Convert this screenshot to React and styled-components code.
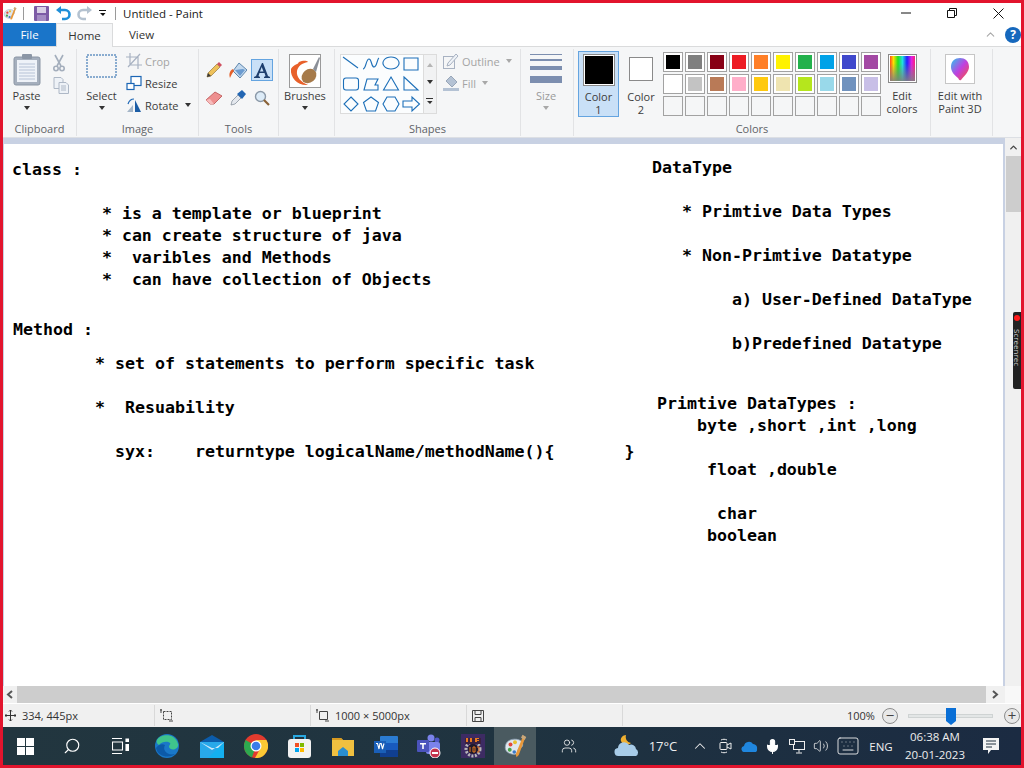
import React from 'react';
import styled, { createGlobalStyle } from 'styled-components';
import { ChevronUp, Mic, Volume2, Keyboard, Search, Users } from 'lucide-react';

const Global = createGlobalStyle`
  html, body { margin: 0; padding: 0; background: #fff; }
  * { box-sizing: border-box; }
`;

const Frame = styled.div`
  width: 1024px;
  height: 768px;
  border: 3px solid #e2142d;
  display: flex;
  flex-direction: column;
  overflow: hidden;
  position: relative;
  font-family: 'Open Sans', 'Noto Sans', sans-serif;
  font-size: 11px;
  color: #3c3c3c;
`;

/* title bar */
const TitleBar = styled.div`
  height: 20px;
  flex: none;
  display: flex;
  align-items: center;
  background: #fff;
`;
const QuickSlot = styled.div`
  width: ${p => p.$w}px;
  margin-left: ${p => p.$m || 0}px;
  display: flex;
  justify-content: center;
  align-items: center;
`;
const TitleSep = styled.div`
  width: 1px;
  height: 13px;
  background: #9a9a9a;
`;
const TitleText = styled.span`
  margin-left: 7px;
  font-size: 11.5px;
  color: #222;
`;
const WinControls = styled.div`
  margin-left: auto;
  display: flex;
`;
const WinBtn = styled.div`
  width: 46px;
  height: 20px;
  display: flex;
  align-items: center;
  justify-content: center;
`;

/* tabs */
const TabRow = styled.div`
  height: 23px;
  flex: none;
  display: flex;
  background: #fff;
  position: relative;
`;
const FileTab = styled.div`
  width: 53px;
  background: #1a75c9;
  color: #fff;
  font-size: 11.5px;
  display: flex;
  align-items: center;
  justify-content: center;
`;
const Tab = styled.div`
  width: ${p => p.$w}px;
  display: flex;
  align-items: center;
  justify-content: center;
  font-size: 11.5px;
  color: #333;
  background: ${p => (p.$active ? '#f5f6f7' : '#fff')};
  border: ${p => (p.$active ? '1px solid #dadbdc' : 'none')};
  border-bottom: none;
  margin-bottom: ${p => (p.$active ? '-1px' : '0')};
  padding-bottom: ${p => (p.$active ? '1px' : '0')};
  z-index: 1;
`;
const HelpArea = styled.div`
  margin-left: auto;
  display: flex;
  align-items: center;
  gap: 8px;
`;
const HelpDot = styled.div`
  width: 16px;
  height: 16px;
  border-radius: 50%;
  background: #1668bd;
  color: #fff;
  font-weight: 700;
  font-size: 12px;
  display: flex;
  align-items: center;
  justify-content: center;
`;

/* ribbon */
const Ribbon = styled.div`
  height: 92px;
  flex: none;
  background: #f5f6f7;
  border-top: 1px solid #dadbdc;
  border-bottom: 1px solid #dcdfe4;
  padding-top: 2px;
  display: flex;
  align-items: flex-start;
`;
const Group = styled.div`
  width: ${p => p.$w}px;
  height: 87px;
  flex: none;
  display: flex;
  flex-direction: column;
  border-right: 1px solid #e2e3e5;
`;
const GroupBody = styled.div`
  height: 73px;
  display: flex;
  align-items: flex-start;
`;
const GroupLabel = styled.div`
  height: 14px;
  line-height: 14px;
  text-align: center;
  color: #5f6368;
  font-size: 11px;
`;
const BigBtn = styled.div`
  width: ${p => p.$w}px;
  flex: none;
  display: flex;
  flex-direction: column;
  align-items: center;
  padding-top: 5px;
  color: ${p => (p.$off ? '#9a9a9a' : '#3c3c3c')};
`;
const BigIcon = styled.div`
  height: 35px;
  display: flex;
  align-items: flex-start;
  justify-content: center;
`;
const BigText = styled.div`
  line-height: 13px;
  text-align: center;
  white-space: pre;
`;
const Caret = styled.div`
  width: 0;
  height: 0;
  margin-top: 4px;
  border-left: 3px solid transparent;
  border-right: 3px solid transparent;
  border-top: 4px solid ${p => (p.$off ? '#a8a8a8' : '#333')};
`;
const SmallCaret = styled(Caret)`
  margin: 0 0 0 3px;
`;
const SideIcons = styled.div`
  display: flex;
  flex-direction: column;
  gap: 5px;
  padding-top: 5px;
  margin-left: 3px;
`;
const SmallCol = styled.div`
  display: flex;
  flex-direction: column;
  padding-top: 1px;
  margin-left: ${p => p.$m || 0}px;
`;
const SmallBtn = styled.div`
  height: 22px;
  display: flex;
  align-items: center;
  gap: 3px;
  color: ${p => (p.$off ? '#a4a4a4' : '#3c3c3c')};
`;
const ToolGrid = styled.div`
  display: grid;
  grid-template-columns: repeat(3, 24px);
  grid-auto-rows: 26px;
  row-gap: 2px;
  margin: 8px 0 0 3px;
`;
const ToolCell = styled.div`
  display: flex;
  align-items: center;
  justify-content: center;
  margin: ${p => (p.$on ? '2px 1px' : '0')};
  background: ${p => (p.$on ? '#c9e0f7' : 'transparent')};
  border: ${p => (p.$on ? '1px solid #64a4e0' : 'none')};
`;
const Gallery = styled.div`
  width: 97px;
  height: 60px;
  margin: 5px 0 0 5px;
  border: 1px solid #dcdcdc;
  display: flex;
  background: #fff;
`;
const ShapeGrid = styled.div`
  width: 82px;
  display: grid;
  grid-template-columns: repeat(4, 20px);
  grid-auto-rows: 20px;
  align-content: center;
  justify-items: center;
  align-items: center;
  background: #fbfdfe;
`;
const GalleryScroll = styled.div`
  flex: 1;
  display: flex;
  flex-direction: column;
  align-items: center;
  justify-content: space-around;
  background: #f1f2f3;
  border-left: 1px solid #dcdcdc;
  padding: 2px 0;
`;
const Arrow = styled.div`
  width: 0;
  height: 0;
  border-left: 3px solid transparent;
  border-right: 3px solid transparent;
  ${p => (p.$up ? `border-bottom: 4px solid ${p.$c}` : `border-top: 4px solid ${p.$c}`)};
`;
const SizeLines = styled.div`
  width: 32px;
  display: flex;
  flex-direction: column;
`;
const SizeLine = styled.div`
  height: ${p => p.$h}px;
  margin-bottom: ${p => p.$gap}px;
  background: #7c8eaf;
`;
const ColorOne = styled(BigBtn)`
  width: 41px;
  height: 66px;
  margin: 2px 0 0 4px;
  padding-top: 2px;
  background: #c9e0f7;
  border: 1px solid #64a4e0;
`;
const Well = styled.div`
  width: ${p => p.$s}px;
  height: ${p => p.$s}px;
  background: ${p => p.$c};
  border: 1px solid #8a8a8a;
  box-shadow: inset 0 0 0 ${p => p.$inner}px #fff;
`;
const WellBox = styled.div`
  height: ${p => p.$h}px;
  padding-top: ${p => p.$pt || 0}px;
  display: flex;
  align-items: flex-start;
  justify-content: center;
`;
const Swatches = styled.div`
  display: grid;
  grid-template-columns: repeat(10, 20px);
  grid-auto-rows: 20px;
  gap: 2px;
  margin-top: 3px;
`;
const Swatch = styled.div`
  border: 1px solid #a2a2a2;
  background: ${p => p.$c || '#f5f6f7'};
  box-shadow: ${p => (p.$c ? 'inset 0 0 0 2px #fff' : 'none')};
`;
const SpectrumTile = styled.div`
  width: 29px;
  height: 29px;
  border: 1px solid #8a8a8a;
  box-shadow: inset 0 0 0 1px #fff;
  background: linear-gradient(180deg, rgba(128,128,128,0) 30%, rgba(128,128,128,.95) 100%),
    linear-gradient(90deg, #ff2020, #ffe000, #20e020, #20e0e0, #2020ff, #e020e0, #ff2060);
`;
const Paint3dTile = styled.div`
  width: 30px;
  height: 30px;
  background: #fff;
  border: 1px solid #c6c6c6;
  display: flex;
  align-items: center;
  justify-content: center;
`;

/* workspace */
const Workspace = styled.div`
  height: 565px;
  flex: none;
  display: grid;
  grid-template-columns: 1fr 16px;
  grid-template-rows: 1fr 17px;
  background: #f0f0f0;
`;
const CanvasArea = styled.div`
  background: #c8d1e3;
  padding: 6px 2px 0 1px;
  display: flex;
`;
const Canvas = styled.div`
  flex: 1;
  background: #fff;
  position: relative;
`;
const Note = styled.div`
  position: absolute;
  left: ${p => p.$x}px;
  top: ${p => p.$y}px;
  margin: 0;
  font-family: 'DejaVu Sans Mono', 'Liberation Mono', monospace;
  font-weight: 700;
  font-size: 16.6px;
  line-height: 22px;
  color: #000;
  white-space: pre;
`;
const VScroll = styled.div`
  background: #f0f0f0;
  display: flex;
  flex-direction: column;
`;
const ScrollEnd = styled.div`
  height: ${p => p.$h || 12}px;
  width: ${p => p.$w || 'auto'};
  flex: none;
  display: flex;
  align-items: center;
  justify-content: center;
`;
const VThumb = styled.div`
  height: 56px;
  margin-left: 1px;
  background: #cdcdcd;
`;
const HScroll = styled.div`
  display: flex;
  background: #f0f0f0;
`;
const HTrack = styled.div`
  width: 969px;
  background: #cdcdcd;
`;
const Corner = styled.div`
  background: #f8f8f8;
`;

/* status bar */
const StatusBar = styled.div`
  height: 24px;
  flex: none;
  display: flex;
  align-items: center;
  background: #f0f0f0;
  border-top: 1px solid #fff;
  color: #333;
  font-size: 11px;
`;
const StatusCell = styled.div`
  width: ${p => p.$w}px;
  height: 21px;
  flex: none;
  display: flex;
  align-items: center;
  gap: 6px;
  padding-left: ${p => p.$p ?? 5}px;
  border-right: 1px solid ${p => (p.$last ? 'transparent' : '#d9d9d9')};
`;
const ZoomArea = styled.div`
  flex: 1;
  display: flex;
  align-items: center;
  padding-left: 22px;
`;
const ZoomLabel = styled.span`
  width: 35px;
  flex: none;
`;
const ZoomBtn = styled.div`
  width: 16px;
  height: 16px;
  border-radius: 50%;
  border: 1px solid #8d8d8d;
  background: #e8e8e8;
  display: flex;
  align-items: center;
  justify-content: center;
  font-size: 15px;
  line-height: 1;
  color: #444;
  flex: none;
`;
const SliderTrack = styled.div`
  width: 85px;
  height: 4px;
  margin: 0 11px 0 10px;
  background: #e3e6e6;
  border: 1px solid #cfd3d3;
  position: relative;
`;
const SliderThumb = styled.svg`
  position: absolute;
  left: 37px;
  top: -7px;
`;

/* taskbar */
const Taskbar = styled.div`
  height: 38px;
  flex: none;
  display: flex;
  align-items: center;
  background: linear-gradient(90deg, #22363f, #1f3340 50%, #1b2b42);
  color: #f2f2f2;
`;
const TaskSlot = styled.div`
  width: ${p => p.$w}px;
  height: 38px;
  margin-left: ${p => p.$m || 0}px;
  flex: none;
  display: flex;
  align-items: center;
  justify-content: center;
  background: ${p => (p.$active ? '#4a5a60' : 'transparent')};
`;
const WinLogo = styled.div`
  display: grid;
  grid-template-columns: 8px 8px;
  grid-auto-rows: 8px;
  gap: 1px;
`;
const WinPane = styled.div`
  background: #fff;
`;
const TempText = styled.span`
  font-size: 13px;
  color: #eee;
`;
const Eng = styled.span`
  font-size: 11.5px;
  color: #eee;
`;
const Clock = styled.div`
  text-align: center;
  font-size: 11.5px;
  line-height: 18px;
  color: #eee;
  margin-top: -1px;
`;

/* screenrec tab lies over the window edge */
const RecTab = styled.div`
  position: absolute;
  right: 0;
  top: 309px;
  width: 8px;
  height: 77px;
  background: #222;
  border-radius: 2px 0 0 2px;
  display: flex;
  flex-direction: column;
  align-items: center;
  padding-top: 3px;
`;
const RecDot = styled.div`
  width: 6px;
  height: 6px;
  flex: none;
  border-radius: 50%;
  background: #ff1a1a;
`;
const RecText = styled.div`
  writing-mode: vertical-rl;
  font-size: 8px;
  line-height: 8px;
  color: #ccc;
  margin-top: 8px;
`;

const PaintIcon = ({ s = 16 }) => (
  <svg width={s} height={s} viewBox="0 0 32 32">
    <path d="M3 18c0-8 7-12 15-11 7 1 9 5 8 9-1 3-5 2-6 5-1 4-2 7-7 6-6-1-10-4-10-9z" fill="#dfe7ee" stroke="#8fa3b5" />
    <circle cx="10" cy="14" r="2.6" fill="#e0483a" />
    <circle cx="16" cy="11" r="2.6" fill="#e8c030" />
    <circle cx="9" cy="21" r="2.6" fill="#4aa04a" />
    <circle cx="15" cy="24" r="2.4" fill="#3a78c8" />
    <path d="M27 2l3 2-9 24-3 3-1-4z" fill="#e8983a" />
    <path d="M26 1l5 3-2 4-5-3z" fill="#c9a77a" />
  </svg>
);

const ClipboardIcon = () => (
  <svg width="28" height="32" viewBox="0 0 28 32">
    <rect x="1" y="3" width="26" height="28" rx="2" fill="#a5afbd" stroke="#8b96a5" />
    <rect x="4" y="6" width="20" height="22" fill="#eef2f8" />
    <path d="M6 10h16M6 13h16M6 16h16M6 19h16M6 22h16M6 25h16" stroke="#b6c2d6" />
    <rect x="9" y="0" width="10" height="5" rx="1" fill="#8b96a5" />
  </svg>
);

const CutIcon = () => (
  <svg width="12" height="18" viewBox="0 0 12 18" fill="none" stroke="#a4aebc" strokeWidth="1.6">
    <path d="M2 1l6 11M10 1L4 12" />
    <circle cx="3" cy="14.5" r="2.2" />
    <circle cx="9" cy="14.5" r="2.2" />
  </svg>
);

const CopyIcon = () => (
  <svg width="16" height="17" viewBox="0 0 16 17" fill="#eef2f7" stroke="#aeb8c6">
    <path d="M1 .5h7l2 2v9H1z" />
    <path d="M6 5.500h7l2.500 2.500v8.500H6z" />
    <path d="M8 9h5M8 11h5M8 13h5" fill="none" />
  </svg>
);

const CropIcon = () => (
  <svg width="16" height="16" viewBox="0 0 16 16" fill="none" stroke="#a8b2c2" strokeWidth="1.2">
    <path d="M4 0v12h12M0 4h12v12M14 1L2 14" />
  </svg>
);
const ResizeIcon = () => (
  <svg width="16" height="16" viewBox="0 0 16 16" fill="#fff" stroke="#1c66b5" strokeWidth="1.2">
    <rect x="5" y="1.500" width="10" height="9" />
    <rect x="1" y="8.500" width="7" height="6" />
  </svg>
);
const RotateIcon = () => (
  <svg width="16" height="16" viewBox="0 0 16 16">
    <path d="M9 15V3l6 12z" fill="#1c5da5" />
    <path d="M1 15l6-7v7z" fill="#a5b6c8" />
    <path d="M2 7c1-3 3-5 6-5" fill="none" stroke="#1c66b5" strokeWidth="1.2" />
  </svg>
);

const PencilIcon = () => (
  <svg width="16" height="16" viewBox="0 0 16 16">
    <path d="M1 15l1-4 9-9 3 3-9 9z" fill="#eec15a" stroke="#8a6a2a" strokeWidth=".6" />
    <path d="M1 15l1-4 3 3z" fill="#3a3a3a" />
    <path d="M11 2l2-2 3 3-2 2z" fill="#d05060" />
  </svg>
);
const BucketIcon = () => (
  <svg width="18" height="18" viewBox="0 0 18 18">
    <path d="M10 2l8 7-7 8-7-7z" fill="#c3d9ee" stroke="#5d86ad" />
    <path d="M6 9l8-1 2 1-5 6z" fill="#6b9bd0" />
    <path d="M4 8C0 10 0 14 1 17c1-2 2-5 4-7z" fill="#e5602a" />
  </svg>
);
const EraserIcon = () => (
  <svg width="18" height="14" viewBox="0 0 18 14">
    <path d="M1 9l9-8 7 4-8 8H5z" fill="#ee8f8f" stroke="#c46666" />
    <path d="M1 9l4 4h4l-4-5z" fill="#f7bcbc" />
  </svg>
);
const PickerIcon = () => (
  <svg width="16" height="16" viewBox="0 0 16 16">
    <path d="M1 15l1-4 6-6 3 3-6 6z" fill="#e4e8ee" stroke="#7b8794" strokeWidth=".7" />
    <path d="M7 4l5-4 4 4-4 5z" fill="#2266b3" />
  </svg>
);
const LensIcon = () => (
  <svg width="16" height="16" viewBox="0 0 16 16">
    <circle cx="6.500" cy="6.500" r="5" fill="#dcebf7" stroke="#8b99a8" strokeWidth="1.4" />
    <path d="M10 10l5 5" stroke="#8a6238" strokeWidth="2.2" />
  </svg>
);

const BrushTile = () => (
  <svg width="32" height="34" viewBox="0 0 32 34">
    <rect x=".5" y=".5" width="31" height="33" fill="#fff" stroke="#9a9a9a" />
    <path d="M2 15c-1 9 7 17 17 16-7-3-12-8-11-14 1-5 5-8 11-9-2-2-6-1-9 0-1 1-1 2-2 2-3 1-5 3-6 5z" fill="#e8602a" />
    <ellipse cx="20" cy="22" rx="8" ry="6.500" fill="#a67a4a" transform="rotate(-40 20 22)" />
    <path d="M24 15l6-12 1 1-4 14z" fill="#8a8f98" />
  </svg>
);

const shapes = [
  'M2 3l15 11',
  'M2 15c3 0 3-10 6-10s2 8 5 8 3-8 5-9',
  'M10 3a8 6 0 1 0 .01 0',
  'M3 4h14v12H3z',
  'M5 4h10a2.500 2.500 0 0 1 2.500 2.500v7a2.500 2.500 0 0 1-2.500 2.500H5a2.500 2.500 0 0 1-2.500-2.500v-7A2.500 2.500 0 0 1 5 4z',
  'M3 16l3-11h11l-3 6h3v5z',
  'M10 3l7.500 13h-15z',
  'M3 3l14 13H3z',
  'M10 3l7 7-7 7-7-7z',
  'M10 3l7.500 5.500-3 8.500h-9l-3-8.500z',
  'M6 3h8l4 7-4 7H6l-4-7z',
  'M2 7h9V3l7.500 7-7.500 7v-4H2z',
];

const swatches = [
  '#000000', '#7f7f7f', '#880015', '#ed1c24', '#ff7f27', '#fff200', '#22b14c', '#00a2e8', '#3f48cc', '#a349a4',
  '#ffffff', '#c3c3c3', '#b97a57', '#ffaec9', '#ffc90e', '#efe4b0', '#b5e61d', '#99d9ea', '#7092be', '#c8bfe7',
  null, null, null, null, null, null, null, null, null, null,
];

const notes = [
  { x: 8, y: 15, text: 'class :\n\n         * is a template or blueprint\n         * can create structure of java\n         *  varibles and Methods\n         *  can have collection of Objects' },
  { x: 9, y: 175, text: 'Method :' },
  { x: 91, y: 209, text: '* set of statements to perform specific task\n\n*  Resuability' },
  { x: 111, y: 297, text: 'syx:    returntype logicalName/methodName(){       }' },
  { x: 648, y: 13, text: 'DataType\n\n   * Primtive Data Types\n\n   * Non-Primtive Datatype\n\n        a) User-Defined DataType\n\n        b)Predefined Datatype' },
  { x: 653, y: 249, text: 'Primtive DataTypes :\n    byte ,short ,int ,long\n\n     float ,double\n\n      char\n     boolean' },
];

const TitleRow = () => (
  <TitleBar>
    <QuickSlot $w={14}><PaintIcon s={15} /></QuickSlot>
    <QuickSlot $w={6} />
    <TitleSep />
    <QuickSlot $w={24} $m={5}>
      <svg width="15" height="15" viewBox="0 0 15 15">
        <rect width="15" height="15" rx="1" fill="#7d5ba6" />
        <rect x="3" y="1" width="9" height="6" fill="#d9d0e6" />
        <rect x="3" y="9" width="9" height="6" fill="#a48cc4" />
      </svg>
    </QuickSlot>
    <QuickSlot $w={21}>
      <svg width="15" height="15" viewBox="0 0 15 15" fill="none">
        <path d="M4 4h5a4 4 0 0 1 0 9H6" stroke="#1f8fd8" strokeWidth="2.600" />
        <path d="M0 4l5-4v8z" fill="#1f8fd8" />
      </svg>
    </QuickSlot>
    <QuickSlot $w={21}>
      <svg width="15" height="15" viewBox="0 0 15 15" fill="none">
        <path d="M11 4H6a4 4 0 0 0 0 9h3" stroke="#b4c2d0" strokeWidth="2.600" />
        <path d="M15 4l-5-4v8z" fill="#b4c2d0" />
      </svg>
    </QuickSlot>
    <QuickSlot $w={16}>
      <svg width="8" height="8" viewBox="0 0 8 8"><path d="M0 1h7v1H0zM1 4h5.500L4 7z" fill="#111" /></svg>
    </QuickSlot>
    <QuickSlot $w={4} />
    <TitleSep />
    <TitleText>Untitled - Paint</TitleText>
    <WinControls>
      <WinBtn>
        <svg width="10" height="10" viewBox="0 0 10 10"><path d="M0 5h10" stroke="#111" /></svg>
      </WinBtn>
      <WinBtn>
        <svg width="10" height="10" viewBox="0 0 10 10" fill="none" stroke="#111">
          <path d="M.5 2.500h7v7h-7zM2.500 2.500v-2h7v7h-2" />
        </svg>
      </WinBtn>
      <WinBtn>
        <svg width="11" height="11" viewBox="0 0 11 11" stroke="#111"><path d="M.5.5l10 10M10.500.5l-10 10" /></svg>
      </WinBtn>
    </WinControls>
  </TitleBar>
);

const RibbonRow = () => (
  <Ribbon>
    <Group $w={74}>
      <GroupBody>
        <BigBtn $w={47}>
          <BigIcon><ClipboardIcon /></BigIcon>
          <BigText>Paste</BigText>
          <Caret />
        </BigBtn>
        <SideIcons>
          <CutIcon />
          <CopyIcon />
        </SideIcons>
      </GroupBody>
      <GroupLabel>Clipboard</GroupLabel>
    </Group>
    <Group $w={122}>
      <GroupBody>
        <BigBtn $w={49}>
          <BigIcon>
            <svg width="31" height="24" viewBox="0 0 31 24" fill="none">
              <rect x="1" y="1" width="29" height="22" stroke="#1f62a8" strokeDasharray="2 1" />
            </svg>
          </BigIcon>
          <BigText>Select</BigText>
          <Caret />
        </BigBtn>
        <SmallCol>
          <SmallBtn $off><CropIcon />Crop</SmallBtn>
          <SmallBtn><ResizeIcon />Resize</SmallBtn>
          <SmallBtn><RotateIcon />Rotate<SmallCaret /></SmallBtn>
        </SmallCol>
      </GroupBody>
      <GroupLabel>Image</GroupLabel>
    </Group>
    <Group $w={80}>
      <GroupBody>
        <ToolGrid>
          <ToolCell><PencilIcon /></ToolCell>
          <ToolCell><BucketIcon /></ToolCell>
          <ToolCell $on>
            <svg width="16" height="15" viewBox="0 0 16 15">
              <path d="M8 0h1l5 13 2 1v1h-6v-1l1.500-1-1-3H5.500l-1 3 1.500 1v1H0v-1l2-1zM6 8.500h3.500L7.700 4z" fill="#1f3f6e" />
            </svg>
          </ToolCell>
          <ToolCell><EraserIcon /></ToolCell>
          <ToolCell><PickerIcon /></ToolCell>
          <ToolCell><LensIcon /></ToolCell>
        </ToolGrid>
      </GroupBody>
      <GroupLabel>Tools</GroupLabel>
    </Group>
    <Group $w={56}>
      <GroupBody>
        <BigBtn $w={52}>
          <BigIcon><BrushTile /></BigIcon>
          <BigText>Brushes</BigText>
          <Caret />
        </BigBtn>
      </GroupBody>
      <GroupLabel />
    </Group>
    <Group $w={186}>
      <GroupBody>
        <Gallery>
          <ShapeGrid>
            {shapes.map(d => (
              <svg key={d} width="20" height="20" viewBox="0 0 20 20" fill="none" stroke="#1c6fb8" strokeWidth="1.1">
                <path d={d} />
              </svg>
            ))}
          </ShapeGrid>
          <GalleryScroll>
            <Arrow $up $c="#b5b5b5" />
            <Arrow $c="#333" />
            <svg width="8" height="8" viewBox="0 0 8 8"><path d="M0 1h7v1H0zM1 4h5.500L4 7z" fill="#333" /></svg>
          </GalleryScroll>
        </Gallery>
        <SmallCol $m={6}>
          <SmallBtn $off>
            <svg width="16" height="16" viewBox="0 0 16 16" fill="none" stroke="#a8b2c2">
              <rect x=".5" y="3.500" width="11" height="12" />
              <path d="M5 10l8-9 2 2-8 9-3 1z" fill="#eef2f7" />
            </svg>
            Outline<SmallCaret $off />
          </SmallBtn>
          <SmallBtn $off>
            <svg width="16" height="16" viewBox="0 0 16 16">
              <path d="M8 1l6 6-5 5-6-6z" fill="#b4c2d4" stroke="#98a6b8" />
              <rect x="0" y="13" width="16" height="3" fill="#b4c2d4" />
            </svg>
            Fill<SmallCaret $off />
          </SmallBtn>
        </SmallCol>
      </GroupBody>
      <GroupLabel>Shapes</GroupLabel>
    </Group>
    <Group $w={53}>
      <GroupBody>
        <BigBtn $w={50} $off>
          <BigIcon>
            <SizeLines>
              <SizeLine $h={1} $gap={4} />
              <SizeLine $h={2} $gap={5} />
              <SizeLine $h={4} $gap={6} />
              <SizeLine $h={7} $gap={0} />
            </SizeLines>
          </BigIcon>
          <BigText>Size</BigText>
          <Caret $off />
        </BigBtn>
      </GroupBody>
      <GroupLabel />
    </Group>
    <Group $w={357}>
      <GroupBody>
        <ColorOne>
          <WellBox $h={36}><Well $s={32} $c="#000" $inner={1} /></WellBox>
          <BigText>{'Color\n1'}</BigText>
        </ColorOne>
        <BigBtn $w={44}>
          <WellBox $h={36} $pt={3}><Well $s={24} $c="#fff" $inner={0} /></WellBox>
          <BigText>{'Color\n2'}</BigText>
        </BigBtn>
        <Swatches>
          {swatches.map((c, i) => <Swatch key={i} $c={c} />)}
        </Swatches>
        <BigBtn $w={42}>
          <WellBox $h={35}><SpectrumTile /></WellBox>
          <BigText>{'Edit\ncolors'}</BigText>
        </BigBtn>
      </GroupBody>
      <GroupLabel>Colors</GroupLabel>
    </Group>
    <Group $w={62}>
      <GroupBody>
        <BigBtn $w={58}>
          <WellBox $h={35}>
            <Paint3dTile>
              <svg width="20" height="24" viewBox="0 0 20 24">
                <defs>
                  <linearGradient id="drop" x1="0" y1="0" x2="1" y2="1">
                    <stop offset="0" stopColor="#28c8f0" />
                    <stop offset=".5" stopColor="#c040e0" />
                    <stop offset="1" stopColor="#ff5030" />
                  </linearGradient>
                </defs>
                <path d="M10 1c5 0 9 3 9 9 0 5-5 9-8 13-2 1-2-1-3-2C4 18 1 14 1 10c0-6 4-9 9-9z" fill="url(#drop)" />
              </svg>
            </Paint3dTile>
          </WellBox>
          <BigText>{'Edit with\nPaint 3D'}</BigText>
        </BigBtn>
      </GroupBody>
      <GroupLabel />
    </Group>
  </Ribbon>
);

const TaskbarRow = () => (
  <Taskbar>
    <TaskSlot $w={45}>
      <WinLogo><WinPane /><WinPane /><WinPane /><WinPane /></WinLogo>
    </TaskSlot>
    <TaskSlot $w={48}>
      <Search size={18} color="#fff" strokeWidth={1.5} style={{ transform: 'scaleX(-1)' }} />
    </TaskSlot>
    <TaskSlot $w={48}>
      <svg width="17" height="16" viewBox="0 0 17 16" fill="none" stroke="#fff" strokeWidth="1.100">
        <path d="M0 .5h10M0 15.500h10M.5 4h10v8H.5z" />
        <path d="M14 1h2.500v2.500H14zM14 6.500h2.500v6H14z" fill="#fff" />
      </svg>
    </TaskSlot>
    <TaskSlot $w={46}>
      <svg width="24" height="24" viewBox="0 0 24 24">
        <circle cx="12" cy="12" r="12" fill="#1a78c8" />
        <path d="M2 6c3-6 18-8 21 4 1 6-8 7-9 3 0-2 2-3 1-4-2-2-8-2-11 2-2-1-3-3-2-5z" fill="#3fc48c" />
        <path d="M10 11c-3 5 2 11 10 9-4 4-17 4-19-6 2-3 6-5 9-3z" fill="#0c5aa8" />
      </svg>
    </TaskSlot>
    <TaskSlot $w={43}>
      <svg width="24" height="23" viewBox="0 0 24 23">
        <path d="M12 0l12 7H0z" fill="#0b5cab" />
        <rect y="7" width="24" height="16" fill="#28a8ea" />
        <path d="M0 7l12 8 12-8v6l-12 0L0 7z" fill="#cfe9fa" />
        <path d="M24 7v16H8z" fill="#14b0f0" />
      </svg>
    </TaskSlot>
    <TaskSlot $w={45}>
      <svg width="24" height="24" viewBox="0 0 24 24">
        <circle cx="12" cy="12" r="12" fill="#e33b2e" />
        <path d="M12 12L1.600 6a12 12 0 0 0 6.400 17.300z" fill="#2da94f" />
        <path d="M12 6h10.400A12 12 0 0 1 11 24l5-9z" fill="#fcc934" />
        <circle cx="12" cy="12" r="5.500" fill="#fff" />
        <circle cx="12" cy="12" r="4.300" fill="#3b7de8" />
      </svg>
    </TaskSlot>
    <TaskSlot $w={43}>
      <svg width="23" height="24" viewBox="0 0 23 24">
        <path d="M6 5V2h11v3" fill="none" stroke="#29a8e0" strokeWidth="2" />
        <rect y="5" width="23" height="19" rx="3" fill="#f2f2f2" />
        <rect x="7" y="9" width="4" height="4" fill="#f25022" />
        <rect x="12" y="9" width="4" height="4" fill="#7fba00" />
        <rect x="7" y="14" width="4" height="4" fill="#00a4ef" />
        <rect x="12" y="14" width="4" height="4" fill="#ffb900" />
      </svg>
    </TaskSlot>
    <TaskSlot $w={43}>
      <svg width="22" height="19" viewBox="0 0 22 19">
        <path d="M0 1h9l2 2h11v16H0z" fill="#f0c040" />
        <path d="M0 1h9l2 2H0z" fill="#d89a20" />
        <path d="M6 14l5-4 5 4v5H6z" fill="#2a8ed0" />
      </svg>
    </TaskSlot>
    <TaskSlot $w={43}>
      <svg width="24" height="21" viewBox="0 0 24 21">
        <rect x="6" width="18" height="21" rx="1" fill="#2b7cd3" />
        <rect x="6" y="7" width="18" height="7" fill="#185abd" />
        <rect x="6" y="14" width="18" height="7" fill="#103f91" />
        <rect y="5" width="12" height="12" fill="#1a5fb8" />
        <path d="M2 7.500h1.500L5 13l1-5.500 1.200 0L8.500 13 10 7.500" fill="none" stroke="#fff" strokeWidth="1.100" />
      </svg>
    </TaskSlot>
    <TaskSlot $w={44}>
      <svg width="24" height="24" viewBox="0 0 24 24">
        <circle cx="14" cy="4" r="3.500" fill="#7b83eb" />
        <circle cx="20" cy="6" r="2.500" fill="#5059c9" />
        <rect x="9" y="8" width="14" height="12" rx="2" fill="#7b83eb" />
        <rect y="6" width="12" height="12" rx="1" fill="#4b53bc" />
        <path d="M3 9h6v1.500H6.800V15H5.200v-4.500H3z" fill="#fff" />
        <circle cx="18" cy="19" r="5" fill="#c4314b" stroke="#fff" />
        <rect x="15" y="18" width="6" height="2" fill="#fff" />
      </svg>
    </TaskSlot>
    <TaskSlot $w={43}>
      <svg width="24" height="24" viewBox="0 0 24 24">
        <rect width="24" height="24" fill="#3d2b63" />
        <circle cx="12" cy="15" r="7" fill="none" stroke="#b8b8b8" strokeWidth="3" strokeDasharray="2 1.500" />
        <circle cx="12" cy="15" r="5" fill="#201a2a" />
        <path d="M4 4h16v6H4z" fill="#3b2240" />
        <path d="M5 8V4h2v4zM9 8V4h2v4zM14 8V4h4v1h-2v1h2v1h-2v1h2" fill="#e87a20" />
        <path d="M9 13v5M12 13h2v5h-2zM16 13h2v5h-2" fill="none" stroke="#e87a20" />
      </svg>
    </TaskSlot>
    <TaskSlot $w={42} $active>
      <PaintIcon s={24} />
    </TaskSlot>
    <TaskSlot $w={34} $m={16}><Users size={16} color="#eee" strokeWidth={1.300} /></TaskSlot>
    <TaskSlot $w={30} $m={26}>
      <svg width="26" height="24" viewBox="0 0 26 24">
        <path d="M12 1c-1 4 1 7 5 8-3 3-9 2-10-2-1-3 2-6 5-6z" fill="#f0b030" />
        <path d="M5 22a4 4 0 0 1-1-8 6 6 0 0 1 11-3 5 5 0 0 1 7 4 4 4 0 0 1 0 7z" fill="#a8cce8" />
      </svg>
    </TaskSlot>
    <TaskSlot $w={36} $m={3}><TempText>17°C</TempText></TaskSlot>
    <TaskSlot $w={20} $m={9}><ChevronUp size={18} color="#eee" strokeWidth={1.400} /></TaskSlot>
    <TaskSlot $w={20} $m={5}>
      <svg width="13" height="16" viewBox="0 0 13 16" fill="none" stroke="#eee">
        <rect x="1" y="4.500" width="7" height="7" rx="1" />
        <path d="M8 7l4-2v6l-4-2M2 2c2-1 4-1 6 0M2 14c2 1 4 1 6 0" />
      </svg>
    </TaskSlot>
    <TaskSlot $w={22} $m={3}>
      <svg width="17" height="11" viewBox="0 0 17 11">
        <path d="M4 11a3 3 0 0 1-1-6 5 5 0 0 1 9-2 4 4 0 0 1 4 5 3 3 0 0 1-1 3z" fill="#1f86de" />
      </svg>
    </TaskSlot>
    <TaskSlot $w={20} $m={2}><Mic size={17} color="#fff" strokeWidth={1.500} fill="#fff" /></TaskSlot>
    <TaskSlot $w={22} $m={4}>
      <svg width="16" height="15" viewBox="0 0 16 15" fill="none" stroke="#eee">
        <rect x="4.500" y="2.500" width="11" height="8" />
        <path d="M10 10.500v3M7 14h6" />
        <rect x=".5" y=".5" width="5" height="5" fill="#1f3040" />
      </svg>
    </TaskSlot>
    <TaskSlot $w={20} $m={3}><Volume2 size={16} color="#eee" strokeWidth={1.200} /></TaskSlot>
    <TaskSlot $w={24} $m={5}><Keyboard size={24} color="#eee" strokeWidth={0.900} /></TaskSlot>
    <TaskSlot $w={30} $m={6}><Eng>ENG</Eng></TaskSlot>
    <TaskSlot $w={70} $m={4}>
      <Clock>06:38 AM<br />20-01-2023</Clock>
    </TaskSlot>
    <TaskSlot $w={30} $m={6}>
      <svg width="16" height="16" viewBox="0 0 16 16">
        <path d="M0 0h16v12H8l-3 4v-4H0z" fill="#f4f4f4" />
        <path d="M3 3h10M3 6h10M3 9h6" stroke="#20303f" />
      </svg>
    </TaskSlot>
  </Taskbar>
);

const App = () => (
  <>
    <Global />
    <Frame>
      <TitleRow />
      <TabRow>
        <FileTab>File</FileTab>
        <Tab $w={57} $active>Home</Tab>
        <Tab $w={57}>View</Tab>
        <HelpArea>
          <ChevronUp size={13} color="#a8a8a8" />
          <HelpDot>?</HelpDot>
        </HelpArea>
      </TabRow>
      <RibbonRow />
      <Workspace>
        <CanvasArea>
          <Canvas>
            {notes.map(n => <Note key={n.text} $x={n.x} $y={n.y}>{n.text}</Note>)}
          </Canvas>
        </CanvasArea>
        <VScroll>
          <ScrollEnd $h={18}><ChevronUp size={11} color="#444" strokeWidth={3} /></ScrollEnd>
          <VThumb />
        </VScroll>
        <HScroll>
          <ScrollEnd $h={17} $w="14px">
            <svg width="8" height="9" viewBox="0 0 8 9" fill="none" stroke="#555" strokeWidth="2"><path d="M6 1L2 4.500 6 8" /></svg>
          </ScrollEnd>
          <HTrack />
          <ScrollEnd $h={17} $w="17px">
            <svg width="8" height="9" viewBox="0 0 8 9" fill="none" stroke="#555" strokeWidth="2"><path d="M2 1l4 3.500L2 8" /></svg>
          </ScrollEnd>
        </HScroll>
        <Corner />
      </Workspace>
      <StatusBar>
        <StatusCell $w={152} $p={2}>
          <svg width="11" height="11" viewBox="0 0 11 11" stroke="#333" fill="none">
            <path d="M5.500 0v11M0 5.500h11M4 1.500L5.500 0 7 1.500M4 9.500L5.500 11 7 9.500M1.500 4L0 5.500 1.500 7M9.500 4L11 5.500 9.500 7" />
          </svg>
          334, 445px
        </StatusCell>
        <StatusCell $w={156}>
          <svg width="13" height="13" viewBox="0 0 13 13" fill="none" stroke="#444">
            <path d="M3.500 2.500h8v8h-8z" strokeDasharray="2 1" />
            <path d="M1 0v4M0 1h2M9 12h4" />
          </svg>
        </StatusCell>
        <StatusCell $w={156}>
          <svg width="13" height="13" viewBox="0 0 13 13" fill="none" stroke="#444">
            <path d="M3.500 2.500h8v8h-8zM1 0v4M0 1h2M9 12h4" />
          </svg>
          1000 × 5000px
        </StatusCell>
        <StatusCell $w={156}>
          <svg width="12" height="12" viewBox="0 0 12 12" fill="none" stroke="#444">
            <path d="M.5.500h11v11H.5zM3 .5v4h6v-4M3 11.500v-4h6v4" />
          </svg>
        </StatusCell>
        <StatusCell $w={202} $last />
        <ZoomArea>
          <ZoomLabel>100%</ZoomLabel>
          <ZoomBtn>−</ZoomBtn>
          <SliderTrack>
            <SliderThumb width="10" height="17" viewBox="0 0 10 17">
              <path d="M0 0h10v13l-5 4-5-4z" fill="#0a6fd6" />
            </SliderThumb>
          </SliderTrack>
          <ZoomBtn>+</ZoomBtn>
        </ZoomArea>
      </StatusBar>
      <TaskbarRow />
      <RecTab>
        <RecDot />
        <RecText>Screenrec</RecText>
      </RecTab>
    </Frame>
  </>
);

export default App;
